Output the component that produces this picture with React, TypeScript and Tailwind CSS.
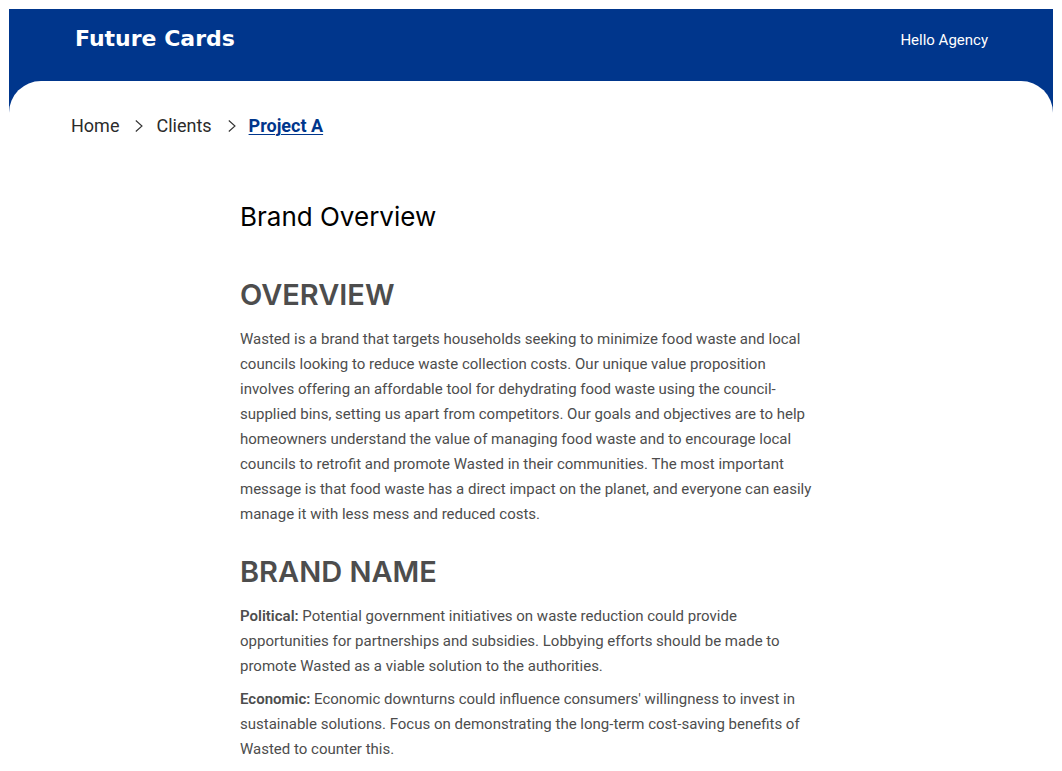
import React from "react";

type Crumb = { label: string; href: string; current?: boolean };
type Passage = { lead?: string; text: string };
type Section = { title: string; passages: Passage[] };

const crumbs: Crumb[] = [
  { label: "Home", href: "#home" },
  { label: "Clients", href: "#clients" },
  { label: "Project A", href: "#project-a", current: true },
];

const sections: Section[] = [
  {
    title: "OVERVIEW",
    passages: [
      {
        text: "Wasted is a brand that targets households seeking to minimize food waste and local councils looking to reduce waste collection costs. Our unique value proposition involves offering an affordable tool for dehydrating food waste using the council-supplied bins, setting us apart from competitors. Our goals and objectives are to help homeowners understand the value of managing food waste and to encourage local councils to retrofit and promote Wasted in their communities. The most important message is that food waste has a direct impact on the planet, and everyone can easily manage it with less mess and reduced costs.",
      },
    ],
  },
  {
    title: "BRAND NAME",
    passages: [
      {
        lead: "Political:",
        text: "Potential government initiatives on waste reduction could provide opportunities for partnerships and subsidies. Lobbying efforts should be made to promote Wasted as a viable solution to the authorities.",
      },
      {
        lead: "Economic:",
        text: "Economic downturns could influence consumers' willingness to invest in sustainable solutions. Focus on demonstrating the long-term cost-saving benefits of Wasted to counter this.",
      },
    ],
  },
];

function Chevron() {
  return (
    <svg width="8" height="14" viewBox="0 0 8 14" fill="none" stroke="#333333" strokeWidth="1.1" aria-hidden="true">
      <path d="M.8 1.5 7 7 .8 12.5" />
    </svg>
  );
}

export default function App() {
  return (
    <div className="bg-white px-[9px] pt-[9px] font-['Roboto','Liberation_Sans',sans-serif]">
      <div className="bg-[#00368c]">
        <header className="flex h-[72px] items-start justify-between pr-[65px] pl-[66px]">
          <a href="#top" className="pt-4 font-['DejaVu_Sans',sans-serif] text-[22px] leading-7 font-bold text-white">
            Future Cards
          </a>
          <a href="#account" className="pt-[19px] text-[15px] leading-6 text-white">
            Hello Agency
          </a>
        </header>
        <main className="rounded-t-[32px] bg-white px-[62px] pt-[33px]">
          <nav aria-label="Breadcrumb">
            <ol className="flex items-center text-[18px] leading-6 text-[#2b2b2b]">
              {crumbs.map((crumb, i) => (
                <li key={crumb.label} className="flex items-center">
                  {i > 0 && (
                    <span className="mr-[13px] ml-4">
                      <Chevron />
                    </span>
                  )}
                  <a
                    href={crumb.href}
                    aria-current={crumb.current ? "page" : undefined}
                    className={
                      crumb.current
                        ? "font-bold text-[#00368c] underline decoration-[#00368c] decoration-1 underline-offset-2"
                        : ""
                    }
                  >
                    {crumb.label}
                  </a>
                </li>
              ))}
            </ol>
          </nav>
          <article className="mx-auto mt-[59px] max-w-[582px] text-[#4d4d4d]">
            <h1 className="mb-[13px] font-['Inter',sans-serif] text-[26px] leading-10 text-black">Brand Overview</h1>
            {sections.map((section) => (
              <section key={section.title} className="pt-[25px]">
                <h2 className="mb-3 font-['Inter',sans-serif] text-[29px] leading-10 font-semibold">
                  {section.title}
                </h2>
                <div className="flex flex-col gap-2 text-[15px] leading-[25px]">
                  {section.passages.map((passage) => (
                    <p key={passage.text}>
                      {passage.lead && <strong className="font-semibold">{passage.lead}</strong>}
                      {passage.lead && " "}
                      {passage.text}
                    </p>
                  ))}
                </div>
              </section>
            ))}
          </article>
        </main>
      </div>
    </div>
  );
}
